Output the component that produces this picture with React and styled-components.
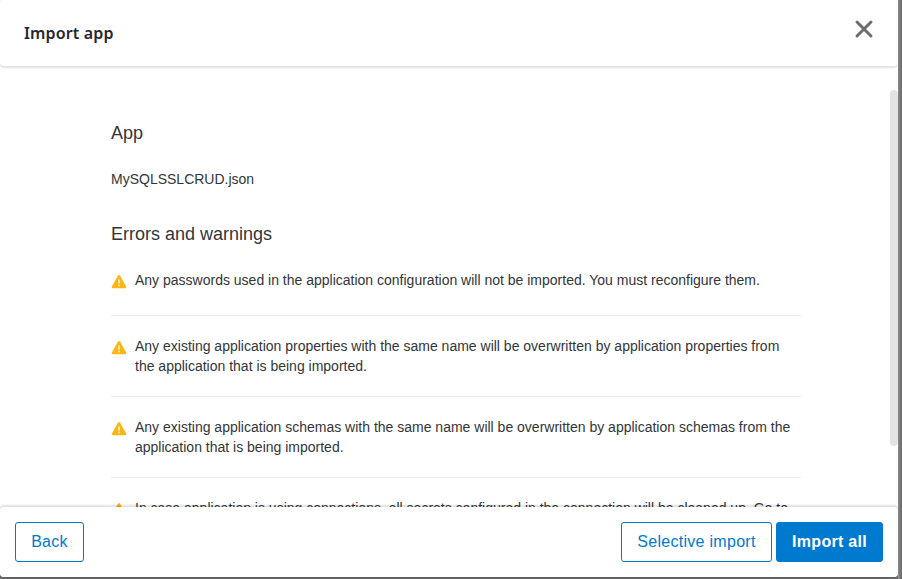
import React from "react";
import styled, { createGlobalStyle } from "styled-components";

const GlobalStyle = createGlobalStyle`
  * { box-sizing: border-box; }
  body { margin: 0; background: #6b6b6b; overflow: hidden; }
`;

const Backdrop = styled.div`
  height: 579px;
  background: linear-gradient(90deg, #6b6b6b 898px, #a0a0a0 898px, #777 900px, #6b6b6b 902px);
  font-family: "Liberation Sans", Arial, sans-serif;
  color: #32363a;
`;

const Dialog = styled.section`
  display: flex;
  flex-direction: column;
  width: 898px;
  height: 577px;
  background: #fff;
  border-radius: 1px 1px 4px 4px;
  box-shadow: 0 0 2px rgba(0, 0, 0, 0.4);
`;

const Header = styled.header`
  position: relative;
  z-index: 1;
  display: flex;
  flex: none;
  justify-content: space-between;
  align-items: center;
  height: 66px;
  padding: 0 24px;
  background: #fff;
  border-radius: 1px 1px 4px 4px;
  box-shadow: 0 1px 2px 1px rgba(0, 0, 0, 0.12);
  clip-path: inset(0 0 -4px 0);
`;

const Title = styled.h1`
  margin: 0;
  font: 600 16px/24px "Noto Sans", sans-serif;
  letter-spacing: 0.14px;
  color: #25282d;
`;

const CloseButton = styled.button`
  display: flex;
  margin: 0 0 8px;
  padding: 0;
  border: 0;
  background: none;
`;

const Body = styled.main`
  display: flex;
  flex: 1;
  justify-content: space-between;
  min-height: 0;
  overflow: hidden;
`;

const Content = styled.div`
  width: 690px;
  margin-left: 111px;
  padding-top: 55px;
`;

const Heading = styled.h2`
  margin: 0;
  font-size: 18px;
  line-height: 24px;
  font-weight: 400;
`;

const FileName = styled.p`
  margin: 24px 0 33px;
  font-size: 14px;
  line-height: 20px;
`;

const Warnings = styled.ul`
  margin: 24px 0 0;
  padding: 0;
  list-style: none;
`;

const Warning = styled.li`
  display: flex;
  gap: 8px;
  min-height: 46px;
  margin-bottom: 20px;
  padding-bottom: 20px;
  border-bottom: 1px solid #ebebeb;
  font-size: 14px;
  line-height: 20px;

  svg { flex: none; margin-top: 4px; }
`;

const ScrollThumb = styled.div`
  flex: none;
  width: 8px;
  height: 356px;
  margin-top: 24px;
  border-radius: 4px;
  background: #e3e3e3;
`;

const Footer = styled.footer`
  position: relative;
  z-index: 1;
  display: flex;
  flex: none;
  justify-content: space-between;
  height: 70px;
  padding: 15px 15px 0;
  background: #fff;
  border-radius: 4px;
  box-shadow: 0 -1px 2px 1px rgba(0, 0, 0, 0.12);
  clip-path: inset(-4px 0 0 0);
`;

const Actions = styled.div`
  display: flex;
  gap: 4px;
`;

const Button = styled.button`
  width: ${({ $width }) => $width}px;
  height: 40px;
  padding: 0;
  border: 1px solid #007acf;
  border-radius: 3px;
  background: ${({ $primary }) => ($primary ? "#007acf" : "#fff")};
  color: ${({ $primary }) => ($primary ? "#fff" : "#007acf")};
  font: ${({ $primary }) => ($primary ? 700 : 400)} 16px/20px "Liberation Sans", Arial, sans-serif;
  letter-spacing: 0.28px;
  white-space: nowrap;
`;

const CloseIcon = () => (
  <svg width="20" height="20" viewBox="0 0 20 20" fill="none" stroke="#6d6d6d" strokeWidth="3" strokeLinecap="round">
    <path d="M3 3l14 14M17 3L3 17" />
  </svg>
);

const WarningIcon = () => (
  <svg width="16" height="16" viewBox="0 0 16 16">
    <path d="M6.9 1.8q1.1-1.6 2.2 0l6 10.6q.6 1.8-1 1.8H1.9q-1.6 0-1-1.8z" fill="#ffb511" />
    <path d="M8 5.5v4M8 10.8v1.5" stroke="#fff" strokeWidth="1.4" />
  </svg>
);

const messages = [
  <>Any passwords used in the application configuration will not be imported. You must reconfigure them.</>,
  <>Any existing application properties with the same name will be overwritten by application properties from<br />the application that is being imported.</>,
  <>Any existing application schemas with the same name will be overwritten by application schemas from the<br />application that is being imported.</>,
  <>In case application is using connections, all secrets configured in the connection will be cleaned up. Go to</>,
];

export default function App() {
  return (
    <Backdrop>
      <GlobalStyle />
      <Dialog>
        <Header>
          <Title>Import app</Title>
          <CloseButton aria-label="Close"><CloseIcon /></CloseButton>
        </Header>
        <Body>
          <Content>
            <Heading>App</Heading>
            <FileName>MySQLSSLCRUD.json</FileName>
            <Heading>Errors and warnings</Heading>
            <Warnings>
              {messages.map((message, i) => (
                <Warning key={i}><WarningIcon /><span>{message}</span></Warning>
              ))}
            </Warnings>
          </Content>
          <ScrollThumb />
        </Body>
        <Footer>
          <Button $width={69}>Back</Button>
          <Actions>
            <Button $width={151}>Selective import</Button>
            <Button $width={107} $primary>Import all</Button>
          </Actions>
        </Footer>
      </Dialog>
    </Backdrop>
  );
}
